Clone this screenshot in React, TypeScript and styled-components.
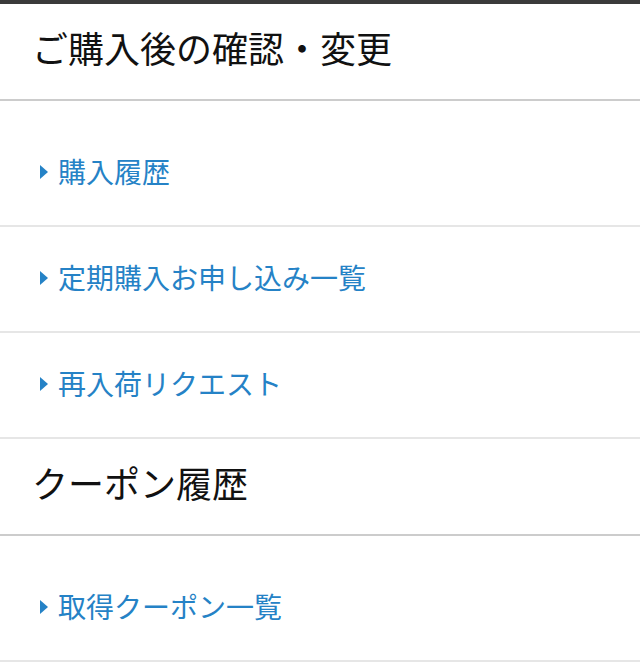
import styled, { createGlobalStyle } from 'styled-components'

const GlobalStyle = createGlobalStyle`
  html, body {
    margin : 0;
    padding : 0;
    background : #ffffff;
  }
  body {
    font-family : "Noto Sans CJK JP", "Noto Sans", sans-serif;
  }
`;

const Page = styled.div`
  width : 640px;
  border-top : 4px solid #3a3a3a;
`;

const SectionTitle = styled.h2`
  margin : 0;
  height : 97px;
  display : flex;
  align-items : center;
  padding : 0 0 9px 32px;
  box-sizing : border-box;
  font-size : 36px;
  font-weight : 400;
  color : #111;
  border-bottom : 2px solid #cccccc;
`;

const LinkList = styled.ul`
  margin : 0;
  padding : 20px 0 0;
  list-style : none;
`;

const Item = styled.li`
  height : 106px;
  box-sizing : border-box;
  padding-bottom : 4px;
  border-bottom : 2px solid #e6e6e6;
  display : flex;
  align-items : center;
`;

const ItemLink = styled.a`
  display : flex;
  align-items : center;
  padding-left : 40px;
  font-size : 28px;
  color : #2582c6;
  text-decoration : none;
  &::before {
    content : "";
    width : 0;
    height : 0;
    border-top : 7px solid transparent;
    border-bottom : 7px solid transparent;
    border-left : 8px solid #2582c6;
    margin-right : 10px;
    margin-top : 2px;
  }
`;

interface Section {
  title: string,
  links: string[],
}

const sections: Section[] = [
  { title: 'ご購入後の確認・変更', links: ['購入履歴', '定期購入お申し込み一覧', '再入荷リクエスト'] },
  { title: 'クーポン履歴', links: ['取得クーポン一覧'] },
];

export default function App() {
  return (
    <Page>
      <GlobalStyle />
      {sections.map(section => (
        <div key={section.title}>
          <SectionTitle>{section.title}</SectionTitle>
          <LinkList>
            {section.links.map(label => (
              <Item key={label}>
                <ItemLink href="#">{label}</ItemLink>
              </Item>
            ))}
          </LinkList>
        </div>
      ))}
    </Page>
  )
}
